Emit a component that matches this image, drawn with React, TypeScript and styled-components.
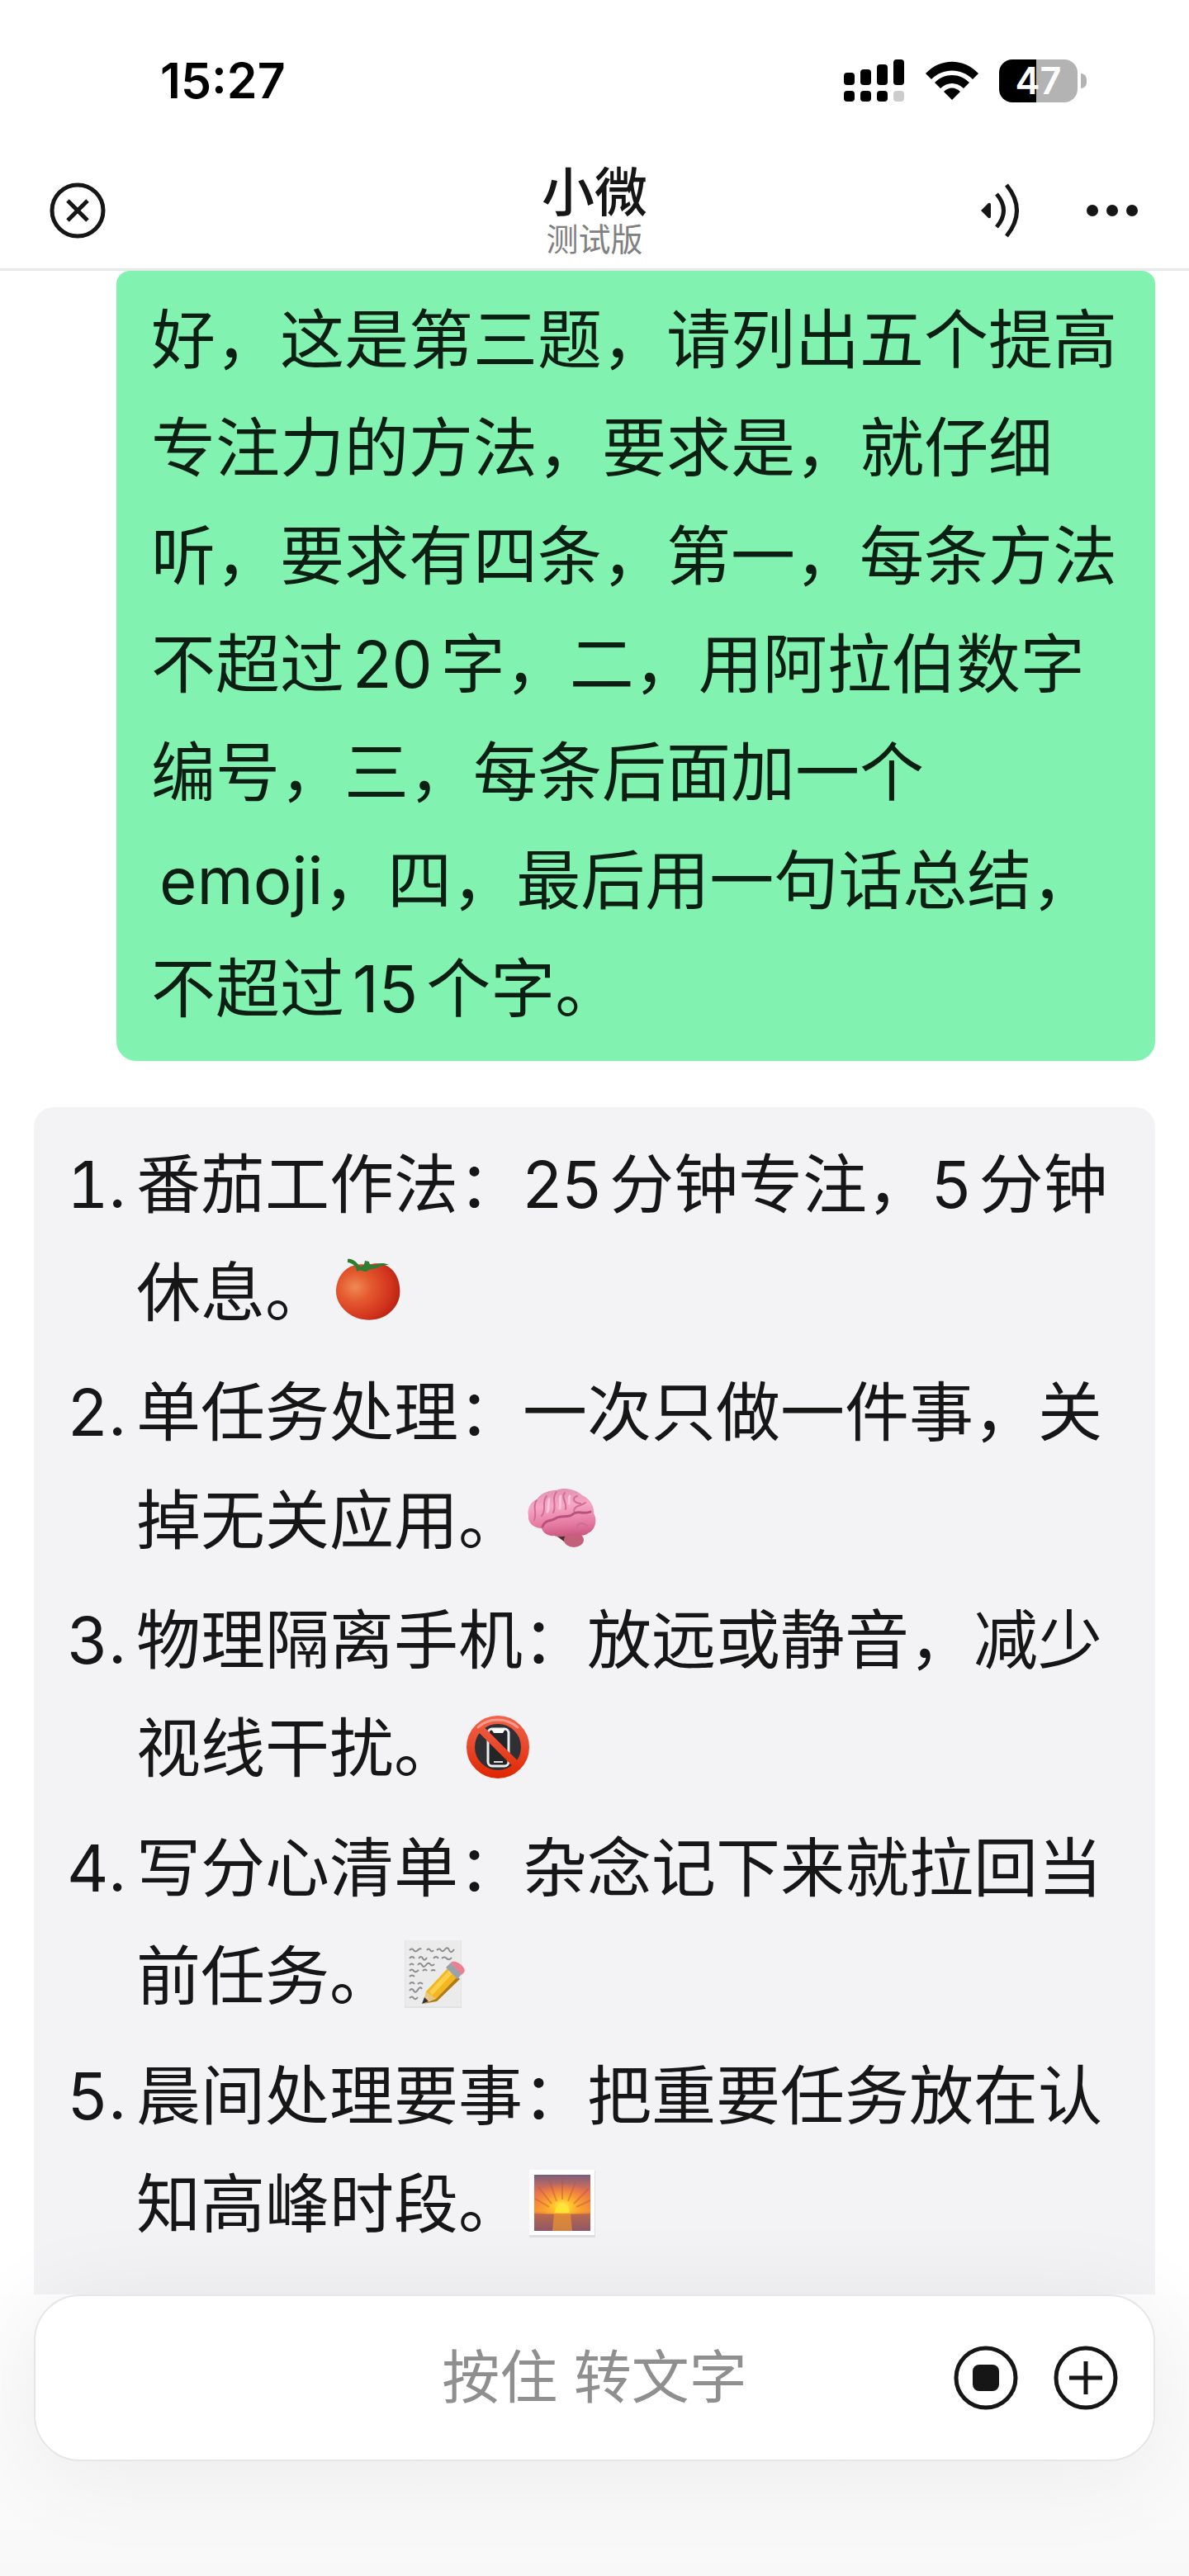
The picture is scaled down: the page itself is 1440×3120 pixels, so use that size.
import React from "react";
import styled, { createGlobalStyle } from "styled-components";

const GlobalStyle = createGlobalStyle`
  * { box-sizing: border-box; }
  body {
    margin: 0;
    background: #ffffff;
    color: #161616;
    font-family: Inter, "Noto Sans CJK SC", sans-serif;
  }
  button { font: inherit; color: inherit; }
`;

const Page = styled.div`
  display: flex;
  flex-direction: column;
  min-height: 100vh;
  overflow: hidden;
`;

const StatusBar = styled.div`
  display: flex;
  align-items: center;
  justify-content: space-between;
  height: 196px;
  padding: 0 124px 0 194px;
`;

const Clock = styled.time`
  font-size: 59px;
  font-weight: 600;
  line-height: 64px;
  color: #000000;
`;

const StatusIcons = styled.div`
  display: flex;
  align-items: center;
  gap: 24px;
`;

const Battery = styled.div`
  display: flex;
  align-items: center;
  gap: 4px;
`;

const BatteryBody = styled.div`
  width: 95px;
  height: 52px;
  border-radius: 16px;
  background: linear-gradient(90deg, #000000 47%, #b3b3b3 47%);
  color: #ffffff;
  font-size: 45px;
  font-weight: 600;
  line-height: 52px;
  text-align: center;
`;

const BatteryTip = styled.div`
  width: 7px;
  height: 18px;
  border-radius: 0 9px 9px 0;
  background: #b3b3b3;
`;

const Header = styled.header`
  display: grid;
  grid-template-columns: 1fr auto 1fr;
  align-items: center;
  height: 132px;
  padding: 0 60px 12px;
  border-bottom: 3px solid #e9e9e9;
`;

const HeaderActions = styled.div`
  display: flex;
  align-items: center;
  justify-content: flex-end;
  gap: 76px;
`;

const IconButton = styled.button`
  display: flex;
  padding: 0;
  border: 0;
  background: none;
  cursor: pointer;
`;

const Heading = styled.div`
  text-align: center;
`;

const Title = styled.h1`
  margin: 0;
  font-size: 64px;
  font-weight: 500;
  line-height: 70px;
`;

const Subtitle = styled.p`
  margin: 0;
  font-size: 39px;
  line-height: 44px;
  color: #808080;
`;

const Chat = styled.main`
  display: flex;
  flex: 1;
  flex-direction: column;
  gap: 56px;
  padding: 0 41px;
  font-size: 78px;
  line-height: 131px;
`;

const UserBubble = styled.p`
  align-self: flex-end;
  width: 1258px;
  max-width: 100%;
  margin: 0;
  padding: 18px 36px 22px 42px;
  border-radius: 16px 16px 24px 24px;
  background: #82f2b1;
  color: #0b1f13;
`;

const ReplyBubble = styled.section`
  flex: 1;
  padding: 28px 40px 44px;
  border-radius: 24px 24px 0 0;
  background: #f3f3f5;
`;

const Methods = styled.ol`
  display: flex;
  flex-direction: column;
  gap: 14px;
  margin: 0;
  padding: 0;
  list-style: none;
`;

const Method = styled.li`
  display: grid;
  grid-template-columns: 68px 1fr;
  column-gap: 16px;
`;

const Marker = styled.span`
  font-variant-numeric: tabular-nums;
  white-space: nowrap;
  text-align: right;
`;

const Line = styled.span`
  display: block;
  white-space: nowrap;
`;

const Latin = styled.span<{ $before?: boolean; $after?: boolean }>`
  margin-left: ${(p) => (p.$before ? 10 : 0)}px;
  margin-right: ${(p) => (p.$after ? 10 : 0)}px;
`;

const EmojiSvg = styled.svg`
  width: 88px;
  height: 88px;
  margin-left: 2px;
  vertical-align: -14px;
`;

const Footer = styled.footer`
  padding: 0 41px 140px;
  background: linear-gradient(#fefefe, #f8f8f8);
`;

const Composer = styled.div`
  display: grid;
  grid-template-columns: 1fr auto 1fr;
  align-items: center;
  height: 202px;
  padding: 0 42px;
  border: 2px solid #e6e6e8;
  border-radius: 56px;
  background: #ffffff;
  box-shadow: 0 12px 120px rgba(0, 0, 0, 0.07);
`;

const HoldToTalk = styled.button`
  grid-column: 2;
  padding: 0;
  border: 0;
  background: none;
  font-size: 70px;
  line-height: 100px;
  color: #8f8f8f;
  cursor: pointer;
`;

const ComposerActions = styled.div`
  display: flex;
  justify-content: flex-end;
  gap: 42px;
`;

const Tomato = () => (
  <EmojiSvg viewBox="0 0 88 88" role="img" aria-label="番茄">
    <defs>
      <radialGradient id="tomato" cx="0.3" cy="0.42" r="0.75">
        <stop offset="0" stopColor="#ee8a54" />
        <stop offset="0.35" stopColor="#e4582e" />
        <stop offset="0.75" stopColor="#d2331d" />
        <stop offset="1" stopColor="#b3200f" />
      </radialGradient>
    </defs>
    <path d="M45 12C60 7 74 13 80 27C87 45 83 60 71 70C57 82 34 81 20 70C7 60 3 46 8 32C14 15 29 9 45 12Z" fill="url(#tomato)" />
    <path d="M20 5C26 4 30 8 34 13C38 15 40 13 41 7L46 8C46 12 49 13 53 12C58 10 63 9 70 12C63 12 59 14 55 16C50 17 46 17 43 20C39 20 36 17 31 20C31 15 27 10 20 9Z" fill="#2f7d32" />
  </EmojiSvg>
);

const Brain = () => (
  <EmojiSvg viewBox="0 0 88 88" role="img" aria-label="大脑">
    <defs>
      <linearGradient id="brain" x1="0.5" y1="0" x2="0.6" y2="1">
        <stop offset="0" stopColor="#e292ae" />
        <stop offset="0.35" stopColor="#f7a6c4" />
        <stop offset="0.75" stopColor="#e4789f" />
        <stop offset="1" stopColor="#c9567f" />
      </linearGradient>
    </defs>
    <path d="M36 62L52 74L58 66Z" fill="#4d2a2c" />
    <ellipse cx="60" cy="69" rx="12" ry="9" fill="#c4617a" />
    <path d="M5 40C3 31 8 23 15 20C21 11 32 9 39 9C50 4 64 9 70 15C79 19 85 28 84 37C89 45 86 57 77 61C72 66 64 63 58 61C50 66 42 66 36 64C29 65 22 60 21 55C12 55 4 49 5 40Z" fill="url(#brain)" />
    <path d="M22 53C25 44 32 47 38 43C45 38 53 44 60 37C66 33 72 39 80 35" fill="none" stroke="#b8527b" strokeWidth="3" strokeLinecap="round" />
    <g fill="none" stroke="#cf6d94" strokeWidth="2" strokeLinecap="round">
      <path d="M15 21C9 29 16 35 12 45M27 16C20 25 28 32 21 40M39 11C32 20 40 26 35 36M49 12C44 18 52 23 50 32M64 16C57 18 59 24 68 25M74 24C67 29 61 27 60 34M65 58C61 50 69 46 76 52" />
    </g>
    <path d="M30 20C28 26 31 29 28 35M44 16C42 21 45 24 43 31M55 16C53 20 55 22 54 25" fill="none" stroke="#fcc4d8" strokeWidth="3" strokeLinecap="round" />
  </EmojiSvg>
);

const NoPhone = () => (
  <EmojiSvg viewBox="0 0 88 88" role="img" aria-label="禁用手机">
    <defs>
      <linearGradient id="ban" gradientUnits="userSpaceOnUse" x1="0" y1="6" x2="0" y2="82">
        <stop offset="0" stopColor="#f0634b" />
        <stop offset="0.45" stopColor="#ea4a2e" />
        <stop offset="1" stopColor="#df2500" />
      </linearGradient>
    </defs>
    <circle cx="46" cy="44" r="32" fill="#2f3033" />
    <rect x="34" y="22" width="25" height="45" rx="5" fill="#242528" stroke="#eeeeee" strokeWidth="3" />
    <path d="M38 22H55L52 27H41Z" fill="#ffffff" />
    <path d="M41 62H52" stroke="#dddddd" strokeWidth="2" />
    <path d="M24 21L69 66" stroke="url(#ban)" strokeWidth="9" />
    <circle cx="46" cy="44" r="33" fill="none" stroke="url(#ban)" strokeWidth="10" />
    <path d="M22 20C35 8 56 8 70 20" fill="none" stroke="#f79a86" strokeWidth="3" strokeLinecap="round" />
  </EmojiSvg>
);

const Memo = () => (
  <EmojiSvg viewBox="0 0 88 88" role="img" aria-label="备忘录">
    <rect x="11" y="2" width="69" height="82" fill="#e2e2e2" />
    <rect x="12" y="2" width="67" height="80" fill="#ebebeb" />
    <g fill="none" stroke="#8c8c90" strokeWidth="2">
      <path d="M17 14q3-3 5 0t5 0t4-1M38 14q2-3 4 0t4 0M50 14q3-3 5 0t5-1t5 1t6-1" />
      <path d="M17 24q3-4 6 0M28 24q3-4 5 0t5-1M46 24q3-4 6 0M56 24q3-3 6 0t6-1" />
      <path d="M17 32q3-3 5 0M27 32q3-4 5 0t5 0t5-1t5 0" />
      <path d="M17 39q3-3 5 0t6-1M33 39q3-3 5 0M43 39q3-2 5 0M17 46q3-3 6 0" />
      <path d="M17 55q3-4 6 0M27 55q3-3 6 0M17 63q3-4 5 0t5-1t5-1M17 72q3-3 5 0t5-1" />
    </g>
    <path d="M37 64L67 32L78 43L49 73L34 77Z" fill="#f3b81f" />
    <path d="M41 64L69 34L73 38L44 69Z" fill="#ffd04a" />
    <path d="M49 73L75 46L78 49L50 76L33 79Z" fill="#b47a12" />
    <path d="M37 64L49 73L34 77Z" fill="#e8c684" />
    <path d="M35 71L40 76L32 79Z" fill="#333333" />
    <path d="M61 35L67 29L80 43L75 49Z" fill="#9aa2ab" />
    <path d="M67 29C72 24 87 35 83 41L80 44Z" fill="#ee7f91" />
  </EmojiSvg>
);

const Sunrise = () => (
  <EmojiSvg viewBox="0 0 88 88" role="img" aria-label="日出">
    <defs>
      <linearGradient id="sky" x1="0" y1="0" x2="0" y2="1">
        <stop offset="0" stopColor="#77607e" />
        <stop offset="0.3" stopColor="#e56f50" />
        <stop offset="0.65" stopColor="#f99135" />
        <stop offset="0.7" stopColor="#d27542" />
        <stop offset="1" stopColor="#8e5c68" />
      </linearGradient>
      <radialGradient id="sun" cx="0.5" cy="0.8" r="0.6">
        <stop offset="0" stopColor="#fff35a" />
        <stop offset="0.25" stopColor="#ffc52c" />
        <stop offset="1" stopColor="#ff8a2a" stopOpacity="0" />
      </radialGradient>
    </defs>
    <rect x="6" y="5" width="80" height="81" fill="#dedee2" />
    <rect x="6" y="4" width="79" height="79" fill="#ffffff" />
    <rect x="12" y="10" width="68" height="68" fill="url(#sky)" />
    <rect x="12" y="10" width="68" height="48" fill="url(#sun)" />
    <path d="M39 42L30 16M46 40V14M53 42L62 19M33 45L17 25M60 45L78 27M30 49L13 39M63 49L80 41" stroke="#b9503f" strokeWidth="2" opacity="0.4" />
    <path d="M37 56C37 43 55 43 55 56Z" fill="#ffe536" />
    <rect x="12" y="57" width="68" height="21" fill="#8f5060" opacity="0.35" />
    <path d="M36 57H56L58 78H34Z" fill="#f39a2e" opacity="0.65" />
  </EmojiSvg>
);

const methods = [
  { first: <>番茄工作法：<Latin $after>25</Latin>分钟专注，<Latin $after>5</Latin>分钟</>, rest: "休息。", Emoji: Tomato },
  { first: "单任务处理：一次只做一件事，关", rest: "掉无关应用。", Emoji: Brain },
  { first: "物理隔离手机：放远或静音，减少", rest: "视线干扰。", Emoji: NoPhone },
  { first: "写分心清单：杂念记下来就拉回当", rest: "前任务。", Emoji: Memo },
  { first: "晨间处理要事：把重要任务放在认", rest: "知高峰时段。", Emoji: Sunrise },
];

export default function App() {
  return (
    <Page lang="zh-CN">
      <GlobalStyle />
      <StatusBar>
        <Clock>15:27</Clock>
        <StatusIcons>
          <svg width="74" height="52" viewBox="0 0 74 52" aria-hidden="true">
            <rect x="0" y="16" width="13" height="15" rx="4" />
            <rect x="20" y="12" width="13" height="19" rx="4" />
            <rect x="40" y="6" width="13" height="25" rx="4" />
            <rect x="60" y="0" width="13" height="31" rx="4" />
            <rect x="0" y="38" width="13" height="13" rx="4" />
            <rect x="20" y="38" width="13" height="13" rx="4" />
            <rect x="40" y="38" width="13" height="13" rx="4" />
            <rect x="60" y="38" width="13" height="13" rx="4" fill="#cccccc" />
          </svg>
          <svg width="66" height="48" viewBox="0 0 66 48" aria-hidden="true">
            <path d="M1 15C19-4 47-4 65 15L58 22C44 8 22 8 8 22Z" />
            <path d="M12 26C24 14 42 14 54 26L47 33C39 25 27 25 19 33Z" />
            <path d="M23 37C29 31 37 31 43 37L33 47Z" />
          </svg>
          <Battery>
            <BatteryBody>47</BatteryBody>
            <BatteryTip />
          </Battery>
        </StatusIcons>
      </StatusBar>

      <Header>
        <IconButton type="button" aria-label="关闭">
          <svg width="68" height="68" viewBox="0 0 68 68" fill="none" stroke="#161616" strokeWidth="5">
            <circle cx="34" cy="34" r="31" />
            <path d="M22 22L46 46M46 22L22 46" />
          </svg>
        </IconButton>
        <Heading>
          <Title>小微</Title>
          <Subtitle>测试版</Subtitle>
        </Heading>
        <HeaderActions>
          <IconButton type="button" aria-label="语音播报">
            <svg width="52" height="68" viewBox="0 0 52 68" fill="none" stroke="#161616" strokeWidth="5">
              <path d="M0 34L9 25Q12 24 12 27V41Q12 44 9 43Z" fill="#161616" stroke="none" />
              <path d="M19 14Q36 34 19 54" />
              <path d="M31 3Q56 34 31 65" />
            </svg>
          </IconButton>
          <IconButton type="button" aria-label="更多">
            <svg width="64" height="68" viewBox="0 0 64 68" fill="#161616">
              <circle cx="7" cy="34" r="7" />
              <circle cx="31" cy="34" r="7" />
              <circle cx="55" cy="34" r="7" />
            </svg>
          </IconButton>
        </HeaderActions>
      </Header>

      <Chat>
        <UserBubble>
          <Line>好，这是第三题，请列出五个提高</Line>
          <Line>专注力的方法，要求是，就仔细</Line>
          <Line>听，要求有四条，第一，每条方法</Line>
          <Line>不超过<Latin $before $after>20</Latin>字，二，用阿拉伯数字</Line>
          <Line>编号，三，每条后面加一个</Line>
          <Line><Latin $before>emoji</Latin>，四，最后用一句话总结，</Line>
          <Line>不超过<Latin $before $after>15</Latin>个字。</Line>
        </UserBubble>
        <ReplyBubble>
          <Methods>
            {methods.map(({ first, rest, Emoji }, i) => (
              <Method key={i}>
                <Marker>{i + 1}.</Marker>
                <div>
                  <Line>{first}</Line>
                  <Line>{rest}<Emoji /></Line>
                </div>
              </Method>
            ))}
          </Methods>
        </ReplyBubble>
      </Chat>

      <Footer>
        <Composer>
          <HoldToTalk type="button">按住 转文字</HoldToTalk>
          <ComposerActions>
            <IconButton type="button" aria-label="停止">
              <svg width="79" height="79" viewBox="0 0 79 79" fill="none" stroke="#161616" strokeWidth="5">
                <circle cx="39" cy="39" r="36" />
                <rect x="23" y="23" width="32" height="32" rx="8" fill="#161616" stroke="none" />
              </svg>
            </IconButton>
            <IconButton type="button" aria-label="添加">
              <svg width="79" height="79" viewBox="0 0 79 79" fill="none" stroke="#161616" strokeWidth="5">
                <circle cx="39" cy="39" r="36" />
                <path d="M19 39H59M39 19V59" />
              </svg>
            </IconButton>
          </ComposerActions>
        </Composer>
      </Footer>
    </Page>
  );
}
